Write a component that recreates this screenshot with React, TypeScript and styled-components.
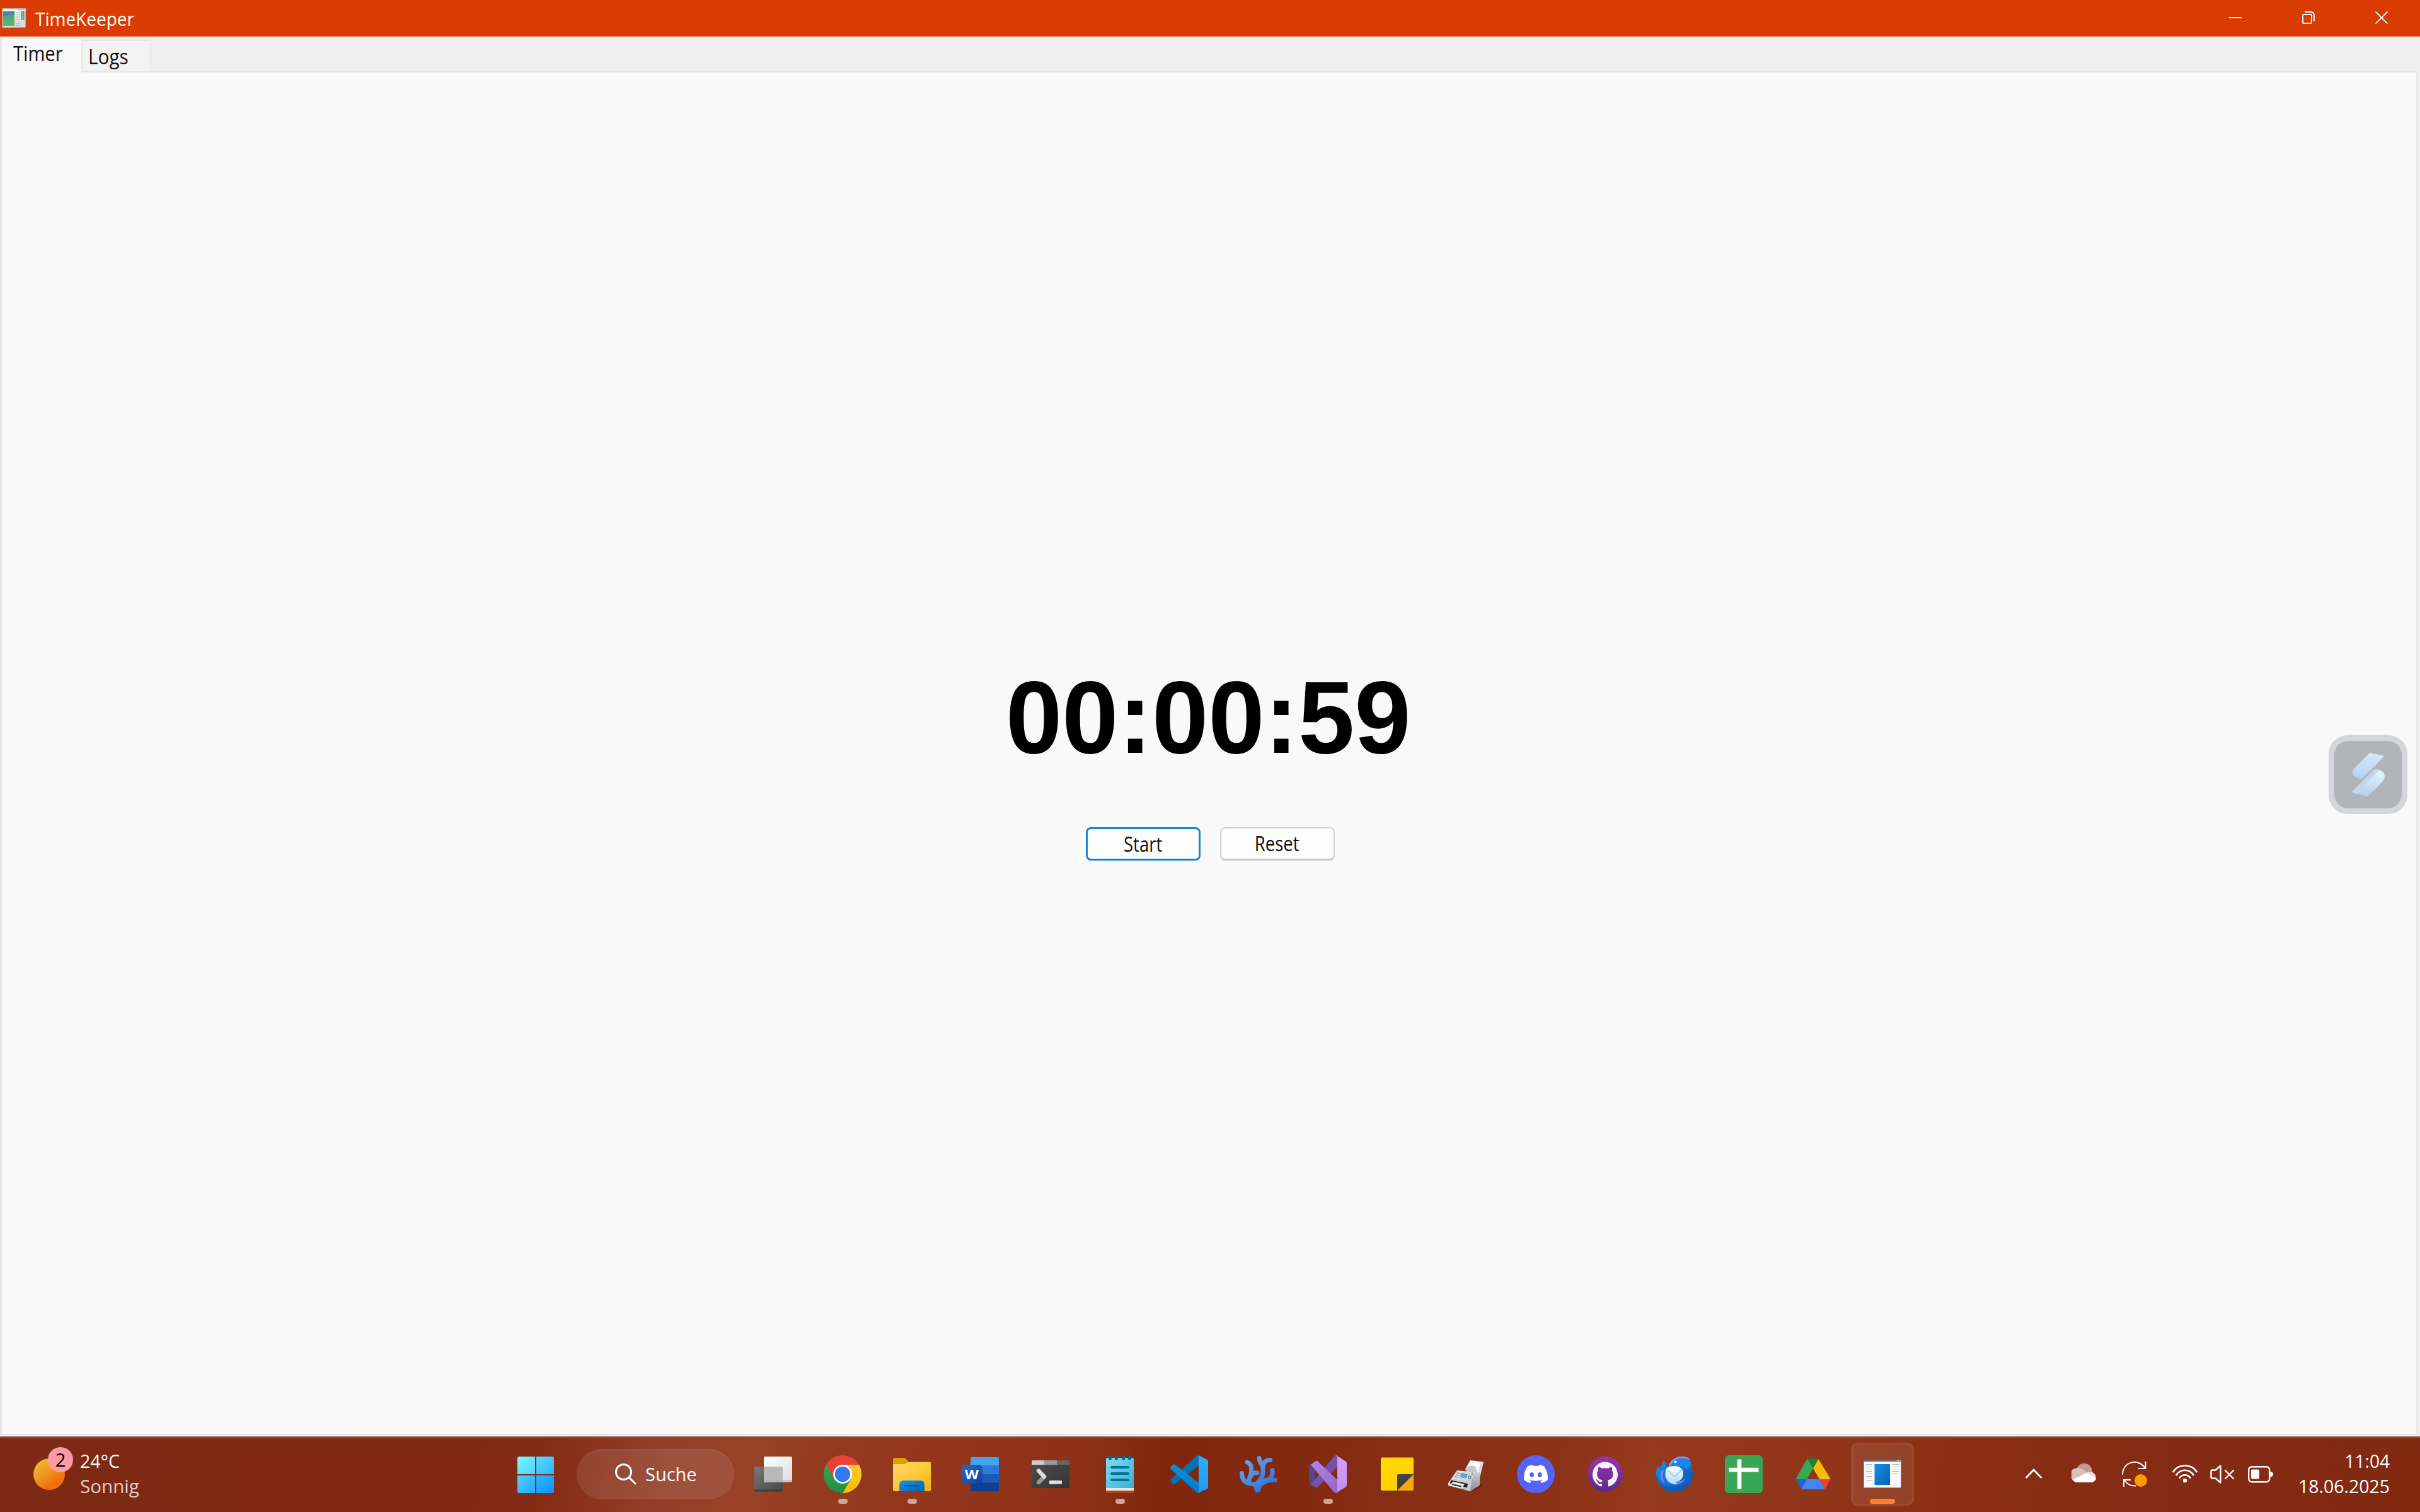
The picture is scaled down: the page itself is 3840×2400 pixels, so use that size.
import React from "react";
import styled, { createGlobalStyle, css } from "styled-components";
import { SiDiscord, SiGithub } from "react-icons/si";

const GlobalStyle = createGlobalStyle`
  * { box-sizing: border-box; }
  html, body { margin: 0; padding: 0; background: #efefef; }
  body { font-family: "Open Sans", "Noto Sans", sans-serif; overflow: hidden; }
  svg { display: block; flex: none; }
`;

const Screen = styled.div`
  width: 3840px;
  height: 2400px;
  display: flex;
  flex-direction: column;
  background: #efefef;
`;

/* ---------- window ---------- */

const TitleBar = styled.header`
  height: 58px;
  display: flex;
  align-items: center;
  padding: 0 3px;
  background: #da3b01;
  color: #fff;
`;

const Label = styled.span<{ $size?: number; $squeeze?: number; $origin?: string }>`
  display: block;
  font-size: ${(p) => p.$size ?? 29}px;
  line-height: 40px;
  white-space: nowrap;
  transform: scaleX(${(p) => p.$squeeze ?? 1});
  transform-origin: ${(p) => p.$origin ?? "left"} center;
`;

const WindowTitle = styled.div`
  flex: 1;
  padding: 2px 0 0 14px;
`;

const WindowButton = styled.div`
  width: 116px;
  height: 58px;
  padding-bottom: 2px;
  display: flex;
  align-items: center;
  justify-content: center;
`;

const TabStrip = styled.nav`
  height: 55px;
  display: flex;
  align-items: flex-end;
  flex: none;
`;

const Tab = styled.div<{ $active?: boolean }>`
  display: flex;
  align-items: center;
  color: #111;
  ${(p) =>
    p.$active
      ? css`
          width: 129px;
          height: 57px;
          margin-bottom: -4px;
          padding: 0 0 10px 18px;
          background: #f9f9f9;
          border: 2px solid #e8e8e8;
          border-left-width: 3px;
          border-bottom: 0;
          border-right: 0;
          z-index: 1;
        `
      : css`
          width: 111px;
          height: 50px;
          padding: 1px 0 0 9px;
          background: #f3f3f3;
          border: 2px solid #e7e7e7;
          border-bottom: 0;
        `}
`;

const Panel = styled.main`
  width: 3836px;
  height: 2165px;
  flex: none;
  display: flex;
  flex-direction: column;
  align-items: center;
  padding-top: 934px;
  background: #f9f9f9;
  border: 2px solid #e6e6e6;
  border-left-width: 3px;
`;

const WindowEdge = styled.div`
  height: 2px;
  background: #f0f0f0;
`;

const Clock = styled.div`
  font: bold 163px/180px "Liberation Sans", Arial, sans-serif;
  color: #000;
  margin-right: 2px;
  transform: scaleX(0.985);
`;

const ButtonRow = styled.div`
  display: flex;
  gap: 31px;
  margin: 84px 0 0 3px;
`;

const PushButton = styled.button<{ $primary?: boolean }>`
  width: 182px;
  height: 53px;
  padding: 0;
  display: flex;
  align-items: center;
  justify-content: center;
  font-family: inherit;
  color: #111;
  background: #fdfdfd;
  border-radius: 8px;
  border: ${(p) => (p.$primary ? "3px solid #1683d8" : "2px solid #d2d2d2")};
  ${(p) => !p.$primary && "border-bottom: 3px solid #c6c6c6;"}
`;

const FloatingBadge = styled.div`
  position: absolute;
  left: 3695px;
  top: 1167px;
  width: 125px;
  height: 125px;
  border: 9px solid #d5d6da;
  border-radius: 30px;
  background: #d5d6da;
`;

const BadgeFace = styled.div`
  width: 107px;
  height: 107px;
  border-radius: 22px;
  background: #b3b4b9;
`;

/* ---------- taskbar ---------- */

const Taskbar = styled.footer`
  height: 120px;
  display: flex;
  align-items: center;
  border-top: 3px solid #804e39;
  color: #fff;
  background: linear-gradient(
    97deg,
    #7d2913 0%,
    #802913 18%,
    #842b14 22.5%,
    #93402a 27.5%,
    #984328 31%,
    #943a1e 34%,
    #91351b 40%,
    #8c3118 45%,
    #80260f 48%,
    #82280f 53%,
    #882d15 57%,
    #8c3219 64%,
    #95391c 68%,
    #91351a 76%,
    #892d14 81%,
    #852b15 90%,
    #822912 100%
  );
  padding-bottom: 3px;
`;

const Weather = styled.div`
  width: 795px;
  display: flex;
  align-items: center;
  padding-left: 53px;
`;

const SunBox = styled.div`
  position: relative;
  width: 74px;
  height: 50px;
`;

const Sun = styled.div`
  width: 50px;
  height: 50px;
  border-radius: 50%;
  background: linear-gradient(145deg, #ebbc30 10%, #ef9c22 40%, #f26c0d 75%, #f27313);
`;

const CountBadge = styled.div`
  position: absolute;
  left: 23px;
  top: -18px;
  width: 40px;
  height: 40px;
  border-radius: 50%;
  background: #ff99a4;
  color: #000;
  display: flex;
  align-items: center;
  justify-content: center;
`;

const TwoLines = styled.div<{ $right?: boolean }>`
  display: flex;
  flex-direction: column;
  align-items: ${(p) => (p.$right ? "flex-end" : "flex-start")};
  padding-bottom: 2px;
`;

const Muted = styled.div`
  color: #e5d0cb;
`;

const AppRow = styled.div`
  display: flex;
  align-items: center;
  height: 100px;
`;

const AppCell = styled.div<{ $active?: boolean }>`
  position: relative;
  width: 100px;
  height: 100px;
  margin: 0 5px;
  display: flex;
  align-items: center;
  justify-content: center;
  border-radius: 11px;
  ${(p) =>
    p.$active &&
    css`
      background: rgba(255, 255, 255, 0.08);
      box-shadow: inset 0 0 0 3px rgba(255, 255, 255, 0.05);
    `}
`;

const Running = styled.i<{ $active?: boolean }>`
  position: absolute;
  bottom: 3px;
  left: ${(p) => (p.$active ? 30 : 43)}px;
  width: ${(p) => (p.$active ? 40 : 15)}px;
  height: 8px;
  border-radius: 4px;
  background: ${(p) => (p.$active ? "#ff7f32" : "#cfa396")};
`;

const SearchPill = styled.div`
  width: 250px;
  height: 80px;
  margin: 0 7px 0 10px;
  padding-left: 61px;
  display: flex;
  align-items: center;
  gap: 14px;
  border-radius: 40px;
  background: rgba(255, 255, 255, 0.09);
  box-shadow: inset 0 3px 0 rgba(255, 255, 255, 0.04);
`;

const Tray = styled.div`
  flex: 1;
  display: flex;
  align-items: center;
  padding-right: 48px;
`;

const TrayIcon = styled.div<{ $before: number }>`
  width: 40px;
  height: 40px;
  margin-left: ${(p) => p.$before}px;
`;

const TrayClock = styled(TwoLines)`
  flex: 1;
`;

/* ---------- drawings ---------- */

const Icon = ({ children }: { children: React.ReactNode }) => (
  <svg width="60" height="60" viewBox="0 0 60 60" overflow="visible">
    {children}
  </svg>
);

const Grad = ({ id, from, to, mid, v }: { id: string; from: string; to: string; mid?: string; v?: boolean }) => (
  <linearGradient id={id} x1="0" y1="0" x2={v ? "0" : "1"} y2="1">
    <stop offset="0" stopColor={from} />
    {mid && <stop offset="0.5" stopColor={mid} />}
    <stop offset="1" stopColor={to} />
  </linearGradient>
);

const WindowsIcon = () => (
  <Icon>
    <Grad id="w1" from="#7df6ff" to="#4dd0ff" />
    <Grad id="w2" from="#5adcff" to="#2eb2ff" />
    <Grad id="w3" from="#4fd2ff" to="#22a7ff" />
    <Grad id="w4" from="#30b5ff" to="#0a95ff" />
    <path d="M4 2H29V30H1V5Q1 2 4 2Z" fill="url(#w1)" />
    <path d="M31 2H56Q59 2 59 5V30H31Z" fill="url(#w2)" />
    <path d="M1 32H29V60H4Q1 60 1 57Z" fill="url(#w3)" />
    <path d="M31 32H59V57Q59 60 56 60H31Z" fill="url(#w4)" />
  </Icon>
);

const TaskViewIcon = () => (
  <Icon>
    <Grad id="tv1" from="#777" to="#484848" />
    <Grad id="tv2" from="#fff" to="#dedede" />
    <rect y="18" width="45" height="39" rx="2" fill="url(#tv1)" />
    <path d="M0 54.5H45V55.500Q45 57.500 43 57.500H2Q0 57.500 0 55.500Z" fill="#3c3c3c" />
    <rect x="15" y="2" width="45" height="40.500" rx="2" fill="url(#tv2)" />
    <path d="M15 18H43Q45 18 45 20V42.500H17Q15 42.500 15 40.500Z" fill="#b9b9b9" />
    <path d="M15 40.500H60" stroke="#b0b0b0" strokeWidth="1.500" />
  </Icon>
);

const ChromeIcon = () => (
  <Icon>
    <Grad id="ch1" from="#34a853" to="#1e8e3e" v />
    <Grad id="ch2" from="#fcc934" to="#fbbc04" v />
    <path d="M4 15A30 30 0 0 1 56 15H30V30L17 37.500Z" fill="#e94235" />
    <path d="M56 15A30 30 0 0 1 30 60L43 37.500L30 30V15Z" fill="url(#ch2)" />
    <path d="M30 60A30 30 0 0 1 4 15L17 37.500L30 30L43 37.500Z" fill="url(#ch1)" />
    <circle cx="30" cy="30" r="15" fill="#fff" />
    <circle cx="30" cy="30" r="12.200" fill="#2f7bee" />
  </Icon>
);

const FolderIcon = () => (
  <Icon>
    <Grad id="f1" from="#ffd96b" mid="#ffca3d" to="#f4b20a" />
    <Grad id="f2" from="#1797e6" to="#0560b4" />
    <path d="M0 7Q0 4 3 4H16Q19 4 21 6L27 13L18 22H0Z" fill="#e0a100" />
    <path d="M0 16Q0 14 2 14H17Q19 14 21 12.500Q24 10.500 26 10.500H58Q60 10.500 60 12.500V55Q60 57 58 57H2Q0 57 0 55Z" fill="url(#f1)" />
    <path d="M10 57V47Q10 40 17 40H43Q50 40 50 47V57Z" fill="url(#f2)" />
    <rect x="18" y="47.500" width="24" height="2" rx="1" fill="#0b4d90" />
  </Icon>
);

const WordGlyph = styled.text`
  font: bold 22px "Open Sans", sans-serif;
  fill: #fff;
`;

const WordIcon = () => (
  <Icon>
    <Grad id="wd" from="#2368c4" to="#0d44a8" />
    <path d="M13 16V5Q13 3 15 3H56Q58 3 58 5V16Z" fill="#41a5ee" />
    <path d="M13 16H58V30H13Z" fill="#2b7cd3" />
    <path d="M13 30H58V43.500H13Z" fill="#185abd" />
    <path d="M13 43.500H58V55Q58 57 56 57H15Q13 57 13 55Z" fill="#103f91" />
    <path d="M13 17H30Q32 17 32 19V45Q32 47 30 47H13Z" fill="#0a2f73" opacity="0.35" />
    <rect y="15" width="30" height="30" rx="2" fill="url(#wd)" />
    <WordGlyph x="15" y="38" textAnchor="middle" textLength="22" lengthAdjust="spacingAndGlyphs">
      W
    </WordGlyph>
  </Icon>
);

const TerminalIcon = () => (
  <Icon>
    <Grad id="t1" from="#4c4c4c" to="#333" />
    <Grad id="t2" from="#eee" to="#ccc" />
    <path d="M0 15H60V50Q60 52 58 52H2Q0 52 0 50Z" fill="url(#t1)" />
    <path d="M0 10Q0 8 2 8H20V15H0Z" fill="#ccc" />
    <path d="M20 8H40V15H20Z" fill="#999" />
    <path d="M40 8H58Q60 8 60 10V15H40Z" fill="#666" />
    <path d="M19 35L11 43" stroke="#9a9a9a" strokeWidth="6.500" strokeLinecap="round" />
    <path d="M11 24.500L20 34" stroke="#ddd" strokeWidth="6.500" strokeLinecap="round" />
    <rect x="28" y="40" width="20" height="6" rx="1" fill="url(#t2)" />
  </Icon>
);

const NotepadIcon = () => (
  <Icon>
    <Grad id="n1" from="#7fdcf5" to="#3faecf" />
    <path d="M8 54H52V58Q52 60 50 60H10Q8 60 8 58Z" fill="#a84f0c" />
    <path d="M8 50H52V56H8Z" fill="#e8e8e8" />
    <path d="M8 6Q8 4 10 4H50Q52 4 52 6V52H8Z" fill="url(#n1)" />
    {[12, 22, 33, 43].map((x) => (
      <rect key={x} x={x} y="0" width="5" height="7.500" rx="2.500" fill="#04688f" />
    ))}
    {[19, 29, 39].map((y) => (
      <rect key={y} x="15" y={y - 2} width="30" height="4" rx="2" fill="#04739c" />
    ))}
  </Icon>
);

const VsCodeIcon = () => (
  <Icon>
    <Grad id="v1" from="#0a93dc" to="#0078cc" />
    <Grad id="v2" from="#29b2f8" to="#1f9cf0" v />
    <path d="M42 .9Q43.500 0 45 0V16.500L7.500 45Q5.500 46.500 4 45L.8 42Q-.5 40 1 38Z" fill="#0074b8" />
    <path d="M42 59.100Q43.500 60 45 60V43.500L7.500 15Q5.500 13.500 4 15L.8 18Q-.5 20 1 22Z" fill="url(#v1)" />
    <path d="M44 0L58 6.500Q60 7.500 60 9.500V50.500Q60 52.500 58 53.500L44 60Q45 59 45 57V3Q45 1 44 0Z" fill="url(#v2)" />
  </Icon>
);

const CoralIcon = () => (
  <Icon>
    <linearGradient id="co" gradientUnits="userSpaceOnUse" x1="10" y1="5" x2="45" y2="55">
      <stop offset="0" stopColor="#69a3ea" />
      <stop offset="1" stopColor="#2f72d0" />
    </linearGradient>
    <g stroke="url(#co)" fill="none" strokeWidth="7" strokeLinecap="round" strokeLinejoin="round">
      <path d="M3.500 28.500C3.500 38 8 44 18 45.500C22 46 26 46 30 45" />
      <path d="M12 11C19 15 19 18 18.500 26C18 34 14 34 15 43" />
      <path d="M28 28C22 27 19 30 17.500 34" />
      <path d="M31 4.500C31 11 36 14 37 20C38 28 37 36 28 44" />
      <path d="M48.500 7.500C42 7.500 38 10 37 18" />
      <path d="M52 23.500C53 32 51 37 40 40L31 48" />
      <path d="M56.500 39.500L46 39.500C40 40 36 44 31 47" />
    </g>
    <path d="M12 43C18 48 23 46 23.500 55Q24 59 28.500 59Q33 59 33.500 55C34 48 38 48 46 43L34 39L26 43Z" fill="url(#co)" />
  </Icon>
);

const VisualStudioIcon = () => (
  <Icon>
    <Grad id="vs1" from="#b784e6" to="#9466cf" />
    <Grad id="vs2" from="#d7a0ff" to="#bf8cf0" v />
    <path d="M0 17L3 13L10 22V38L3 48L0 44Z" fill="#5c418d" />
    <path d="M2.500 46.500L39 3Q41 0 45 0V18L14 50.500Q12.500 52 11 51L3.500 47.500Z" fill="#7252aa" />
    <path d="M3 15L10 9.500Q12.500 8 14.500 10L45 39V60Q41 60 39 57.500Z" fill="url(#vs1)" />
    <path d="M41.500 0Q43 0 44 .6L58 9.500Q60 10.500 60 12.500V47.500Q60 49.500 58 50.500L44 59.400Q43 60 41.500 60Q45 59 45 56V4Q45 1 41.500 0Z" fill="url(#vs2)" />
  </Icon>
);

const StickyIcon = () => (
  <Icon>
    <Grad id="s1" from="#ffdf00" to="#ffc800" />
    <Grad id="s2" from="#4a4a4a" to="#303030" />
    <path d="M4 5.500Q4 3.500 6 3.500H54Q56 3.500 56 5.500V30L30 56H6Q4 56 4 54Z" fill="url(#s1)" />
    <path d="M56 30V54Q56 56 54 56H30Z" fill="#f5aa08" />
    <path d="M30 56V32Q30 30 32 30H56Z" fill="url(#s2)" />
  </Icon>
);

const FaxIcon = () => (
  <Icon>
    <Grad id="x1" from="#f4f5f6" to="#a9aeb3" />
    <Grad id="x2" from="#c9cdd1" to="#888d92" v />
    <path d="M51 46L56 47Q52 53 36 57Z" fill="#3a0f05" opacity="0.5" />
    <path d="M36 8L57 10.500L51 35L28 22Z" fill="#f7f8f9" />
    <path d="M57 10.500L51 35L47 33L53 10Z" fill="#dadde0" />
    <path d="M28 22Q34 14 44 18L47 28L30 26Z" fill="#c4c7ca" />
    <path d="M15 24L45 27L51 28V47.500L36 57L1 48L1 44L6 37Z" fill="url(#x1)" />
    <path d="M45 27L51 28V47.500L36 57L38 40Z" fill="url(#x2)" />
    <path d="M6 37L38 42L35 57L31 56L33 47L5 41Z" fill="#c9cdd1" />
    <path d="M5 39.500L32 45L31 51L4 45Z" fill="#1d1f21" />
    <path d="M9 42L27 46L22 52L2 48Z" fill="#fdfdfd" />
    <path d="M8 45L23 48.500L21 50.500L6 47Z" fill="#3b3e41" />
    <path d="M22 28.500L31.500 30L29.500 36L20 34.500Z" fill="#4ba6e6" stroke="#8b959d" strokeWidth="0.800" />
    <g fill="#777e85">
      {[0, 1, 2].map((r) =>
        [0, 1, 2].map((c) => (
          <circle key={`${r}${c}`} cx={15.500 + c * 2.200 - r * 1.600} cy={28 + r * 3 + c * 0.400} r="0.900" />
        ))
      )}
      <circle cx="35" cy="35" r="2.800" />
    </g>
    <circle cx="35" cy="35" r="1.300" fill="#e8eaec" />
    <path d="M37 30.500L43 31.500" stroke="#8b9197" strokeWidth="1.200" />
    <path d="M38 28L40 28.300" stroke="#d24a3a" strokeWidth="1.200" />
  </Icon>
);

const DiscordIcon = () => (
  <Icon>
    <circle cx="30" cy="30" r="30" fill="#5663f7" />
    <SiDiscord x="11" y="10.500" size={38} color="#fff" />
  </Icon>
);

const GithubIcon = () => (
  <Icon>
    <Grad id="gh" from="#9933b3" to="#5b2a87" v />
    <circle cx="30" cy="30" r="28" fill="url(#gh)" />
    <SiGithub x="10" y="10" size={40} color="#f5f2fa" />
  </Icon>
);

const ThunderbirdIcon = () => (
  <Icon>
    <Grad id="tb1" from="#1b90f0" mid="#1272d8" to="#0c4fa6" />
    <Grad id="tb2" from="#fff" to="#a8d8fa" v />
    <path
      d="M12 8C15 9 17 12 17 17C19 17 20 18 20.500 16C24 6 34 1 43 2C49 2 53 4 55 8L53.500 8C56 10 57 12 57 13.500L55 13C58 18 59 24 59 30C59 46 46 58 30 58C14 58 1 47 1 30C1 25 1 21 4.500 17L5 22C8 17 11 15 12 8Z"
      fill="url(#tb1)"
    />
    <path d="M20.500 18C23 7 34 1 43 2C49 2 53 4 55 8C48 4 38 3 32 7C28 10 25 12 25 16Z" fill="#a88cf0" />
    <path d="M26 15C30 6 40 3 50 6C54 8 55 12 57 14C53 24 46 22 42 18Z" fill="#1b86ea" />
    <path d="M1 30C4 46 18 53 33 50C46 47 56 40 59 30C59 46 46 58 30 58C14 58 1 47 1 30Z" fill="#0d58b4" opacity="0.700" />
    <path d="M10 24C6 32 8 40 14 45C12 38 10 32 13 24Z" fill="#6b83ec" />
    <path d="M29 40Q40 44 48 36Q44 45 34 46Z" fill="#6b83ec" />
    <path d="M16 24C17 19 23 17 30 17C38 17 44 21 44 29C44 37 39 41 33 42C31 44 34 45 36 46C24 48 15 40 15.500 30Z" fill="url(#tb2)" />
    <path d="M19 23L28 32.500Q30 34 32 32.500L42 22" fill="none" stroke="#9fc4de" strokeWidth="1.600" />
    <ellipse cx="31.500" cy="10.500" rx="2.500" ry="1.500" fill="#fff" transform="rotate(-15 31 10)" />
  </Icon>
);

const SheetsIcon = () => (
  <Icon>
    <rect width="60" height="60" rx="6" fill="#36a853" />
    <path d="M19.700 6.500H26.300V19.700H53.500V26.300H26.300V53.500H19.700V26.300H6.500V19.700H19.700Z" fill="#fff" />
  </Icon>
);

const DriveIcon = () => (
  <Icon>
    <path d="M22 5.500L30 20.500L20 38H3Q2.500 37 3.500 35.500L19.500 7.500Q20.500 5.500 22 5.500Z" fill="#34a853" />
    <path d="M21.500 6Q22 5.200 24 5.200H36Q38 5.200 38.500 6L30 20.500Z" fill="#188038" />
    <path d="M38.500 6L57 36.500Q57.500 37.500 57 38H40L30 20.500Z" fill="#fbbc04" />
    <path d="M3 38H20L11.500 53Q10.500 52.500 10 51.500L3.500 40Q2.500 39 3 38Z" fill="#1967d2" />
    <path d="M20 38H40L48.500 53Q48 53.700 46.500 53.700H13.500Q12 53.700 11.500 53Z" fill="#4285f4" />
    <path d="M40 38H57Q57.500 39 56.500 40L50 51.500Q49.500 52.500 48.500 53Z" fill="#ea4335" />
  </Icon>
);

const WindowAppIcon = () => (
  <Icon>
    <Grad id="ap" from="#1792e2" to="#0561b5" />
    <rect x="0" y="7" width="60" height="45" rx="1.500" fill="#696b6d" />
    <path d="M.7 10H59.300V50.500Q59.300 51.300 58.500 51.300H1.500Q.7 51.300 .7 50.500Z" fill="#fafafa" />
    {[52.500, 55, 57.500].map((x) => (
      <rect key={x} x={x} y="8" width="1.200" height="1.200" fill="#ddd" />
    ))}
    <rect x="17.500" y="14" width="24.500" height="33" fill="url(#ap)" />
    {[14.500, 18.500, 22, 25.500, 29.500, 33.500, 37, 40.500].map((y, i) => (
      <rect key={y} x="4" y={y - 0.500} width="10" height="1" fill={i === 2 || i === 6 ? "#ddd" : "#b5b5b5"} />
    ))}
    {[14.500, 18.500, 22, 25.500, 29.500].map((y, i) => (
      <rect key={y} x="45" y={y - 0.500} width="11" height="1" fill={i === 2 ? "#ddd" : "#b5b5b5"} />
    ))}
  </Icon>
);

const apps: { Draw: () => React.ReactElement; running?: boolean; active?: boolean }[] = [
  { Draw: TaskViewIcon },
  { Draw: ChromeIcon, running: true },
  { Draw: FolderIcon, running: true },
  { Draw: WordIcon },
  { Draw: TerminalIcon },
  { Draw: NotepadIcon, running: true },
  { Draw: VsCodeIcon },
  { Draw: CoralIcon },
  { Draw: VisualStudioIcon, running: true },
  { Draw: StickyIcon },
  { Draw: FaxIcon },
  { Draw: DiscordIcon },
  { Draw: GithubIcon },
  { Draw: ThunderbirdIcon },
  { Draw: SheetsIcon },
  { Draw: DriveIcon },
  { Draw: WindowAppIcon, running: true, active: true },
];

const FormIcon = () => (
  <svg width="39" height="32" viewBox="0 0 39 32">
    <Grad id="fi1" from="#4a7fa8" to="#67b868" mid="#4f9c8e" v />
    <Grad id="fi2" from="#fafafa" to="#d2d2d2" />
    <rect x="0.500" y="0.500" width="37.500" height="30.500" rx="1" fill="url(#fi2)" stroke="#8c7b74" />
    <path d="M1 1.500H38" stroke="#e3e3e3" strokeWidth="2" />
    <path d="M26 1.500H37" stroke="#999" strokeWidth="1" />
    <rect x="2" y="5" width="18" height="23" fill="url(#fi1)" />
    <path d="M2 14Q10 9 20 11V28H2Z" fill="#5bbf5f" opacity="0.350" />
    {[6, 9, 12, 15, 18, 24, 27].map((y) => (
      <path key={y} d={`M22 ${y}.500H29`} stroke="#c0c0c0" />
    ))}
    <rect x="30.500" y="5" width="5" height="14" fill="url(#fi1)" />
    <path d="M33 5V19M30.500 9H35.500M30.500 13H35.500" stroke="#b9d4cc" strokeWidth="0.600" />
  </svg>
);

const ChevronIcon = () => (
  <svg width="40" height="40" viewBox="0 0 40 40">
    <path d="M7.500 26L20 13L32.500 26" fill="none" stroke="#fff" strokeWidth="2.800" />
  </svg>
);

const CloudIcon = () => (
  <svg width="40" height="40" viewBox="0 0 40 40">
    <path d="M8 13.500A12.300 12.300 0 0 1 32.500 17L22 22Z" fill="#c39a8f" />
    <path d="M1.800 29A10.500 10.500 0 0 1 9 10.500Q18 9.500 25 18L4 31Z" fill="#d9c0b9" />
    <path d="M22 20Q25 16 30 16A9.500 9.500 0 0 1 38 29L34 30Z" fill="#eaddda" />
    <path d="M24.500 18L39 26.500Q37.500 33 31 33H10Q4 33 1.500 28.500Z" fill="#fff" />
  </svg>
);

const SyncIcon = () => (
  <svg width="40" height="40" viewBox="0 0 40 40" overflow="visible">
    <g fill="none" stroke="#fff" strokeWidth="2">
      <path d="M1 21A19 19 0 0 1 36.500 10.500M37.500 0V11H26" />
      <path d="M22 38.500A19 19 0 0 1 4 29.500M3 40V29H14" />
    </g>
    <circle cx="30" cy="30" r="10" fill="#ff9a00" />
  </svg>
);

const WifiIcon = () => (
  <svg width="40" height="40" viewBox="0 0 40 40" overflow="visible">
    <g fill="none" stroke="#fff" strokeWidth="2.600">
      <path d="M.8 17A22.500 22.500 0 0 1 39.200 17" />
      <path d="M6 22A16 16 0 0 1 34 22" />
      <path d="M11 26.500A10.500 10.500 0 0 1 29 26.500" />
    </g>
    <circle cx="20" cy="30" r="3.200" fill="#fff" />
  </svg>
);

const MuteIcon = () => (
  <svg width="40" height="40" viewBox="0 0 40 40" overflow="visible">
    <g fill="none" stroke="#fff" strokeWidth="2.400" strokeLinejoin="round" strokeLinecap="round">
      <path d="M16.500 6.500V33.500L8.500 26.500H3.500Q1.500 26.500 1.500 24.500V15.500Q1.500 13.500 3.500 13.500H8.500Z" />
      <path d="M24 14L37 27M37 14L24 27" />
    </g>
  </svg>
);

const BatteryIcon = () => (
  <svg width="40" height="40" viewBox="0 0 40 40" overflow="visible">
    <rect x="1.200" y="8.200" width="33" height="24" rx="5" fill="none" stroke="#fff" strokeWidth="2.400" />
    <rect x="5" y="12.500" width="13" height="15" rx="2" fill="#fff" />
    <path d="M35 16H37Q40 17 40 20Q40 23 37 24H35Z" fill="#fff" />
  </svg>
);

const SwiftMark = () => (
  <svg width="107" height="107" viewBox="0 0 107 107">
    <Grad id="m1" from="#d7e7f8" to="#b2d1f6" v />
    <linearGradient id="m2" x1="0.700" y1="0" x2="0.500" y2="1">
      <stop offset="0" stopColor="#e4f4fb" />
      <stop offset="1" stopColor="#b2d1f5" />
    </linearGradient>
    <path d="M56.500 19L79.500 24L43.500 60.500Q29.500 59 29.500 49.500Q29.500 45.500 33 42Z" fill="url(#m1)" />
    <path d="M64 45Q80 46.500 80 57Q80 61 76.500 65L52.500 88.500L27.500 81.500Z" fill="url(#m2)" />
    <path d="M64 45L71 46.500L35 84L27.500 81.500Z" fill="#c5d6ea" />
  </svg>
);

export default function App() {
  return (
    <>
      <GlobalStyle />
      <Screen>
        <TitleBar>
          <FormIcon />
          <WindowTitle>
            <Label $squeeze={0.965}>TimeKeeper</Label>
          </WindowTitle>
          <WindowButton>
            <svg width="20" height="20" viewBox="0 0 20 20">
              <path d="M0 10H20" stroke="#fff" strokeWidth="2" />
            </svg>
          </WindowButton>
          <WindowButton>
            <svg width="20" height="20" viewBox="0 0 20 20" fill="none" stroke="#fff" strokeWidth="2">
              <rect x="1" y="5" width="14" height="14" rx="2" />
              <path d="M4.500 1H13Q19 1 19 7V15.500" />
            </svg>
          </WindowButton>
          <WindowButton>
            <svg width="20" height="20" viewBox="0 0 20 20" stroke="#fff" strokeWidth="1.800">
              <path d="M.5 .5L19.500 19.500M19.500 .5L.5 19.500" />
            </svg>
          </WindowButton>
        </TitleBar>
        <TabStrip>
          <Tab $active>
            <Label $size={32} $squeeze={0.91}>Timer</Label>
          </Tab>
          <Tab>
            <Label $size={32} $squeeze={0.93}>Logs</Label>
          </Tab>
        </TabStrip>
        <Panel>
          <Clock>00:00:59</Clock>
          <ButtonRow>
            <PushButton $primary>
              <Label $size={32} $squeeze={0.86} $origin="center">Start</Label>
            </PushButton>
            <PushButton>
              <Label $size={32} $squeeze={0.86} $origin="center">Reset</Label>
            </PushButton>
          </ButtonRow>
        </Panel>
        <WindowEdge />
        <Taskbar>
          <Weather>
            <SunBox>
              <Sun />
              <CountBadge>
                <Label>2</Label>
              </CountBadge>
            </SunBox>
            <TwoLines>
              <Label $squeeze={0.985}>24°C</Label>
              <Muted>
                <Label $squeeze={1.02}>Sonnig</Label>
              </Muted>
            </TwoLines>
          </Weather>
          <AppRow>
            <AppCell>
              <WindowsIcon />
            </AppCell>
            <SearchPill>
              <svg width="34" height="34" viewBox="0 0 34 34" fill="none" stroke="#fff" strokeWidth="3">
                <circle cx="13.500" cy="13.500" r="12" />
                <path d="M22 22L32 32" strokeLinecap="round" />
              </svg>
              <Label>Suche</Label>
            </SearchPill>
            {apps.map(({ Draw, running, active }, i) => (
              <AppCell key={i} $active={active}>
                <Draw />
                {running && <Running $active={active} />}
              </AppCell>
            ))}
          </AppRow>
          <Tray>
            <TrayIcon $before={165}><ChevronIcon /></TrayIcon>
            <TrayIcon $before={40}><CloudIcon /></TrayIcon>
            <TrayIcon $before={40}><SyncIcon /></TrayIcon>
            <TrayIcon $before={40}><WifiIcon /></TrayIcon>
            <TrayIcon $before={20}><MuteIcon /></TrayIcon>
            <TrayIcon $before={20}><BatteryIcon /></TrayIcon>
            <TrayClock $right>
              <Label $squeeze={0.965} $origin="right">11:04</Label>
              <Label $squeeze={0.98} $origin="right">18.06.2025</Label>
            </TrayClock>
          </Tray>
        </Taskbar>
        <FloatingBadge>
          <BadgeFace>
            <SwiftMark />
          </BadgeFace>
        </FloatingBadge>
      </Screen>
    </>
  );
}
